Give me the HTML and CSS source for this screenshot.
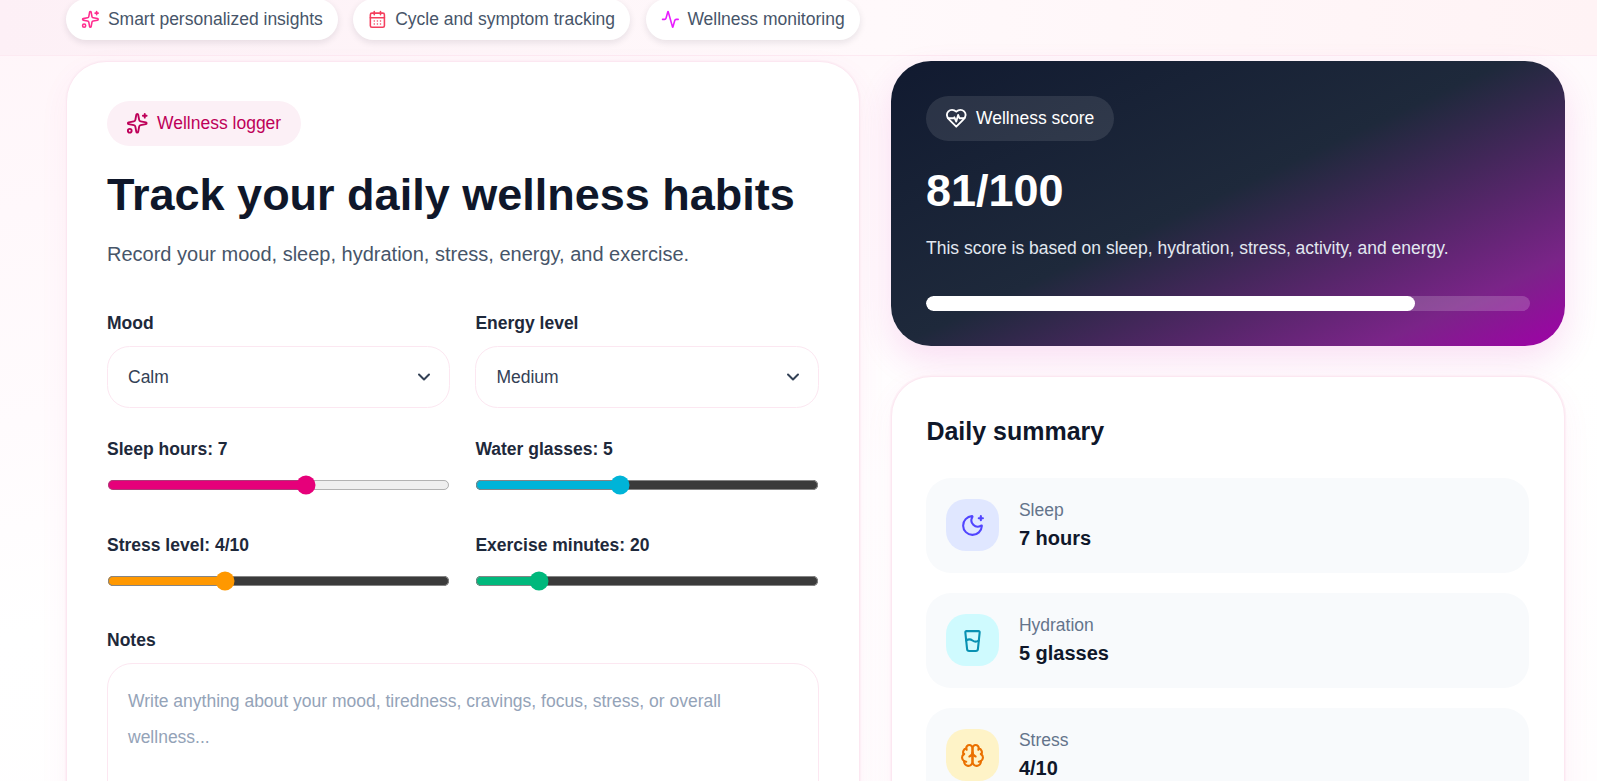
FILE: index.html
```html
<!DOCTYPE html>
<html lang="en">
<head>
<meta charset="utf-8">
<title>Wellness tracker</title>
<link rel="stylesheet" href="styles.css">
</head>
<body>
<div class="page">
  <header class="strip">
    <div class="chip"><svg class="ico c-pink" viewBox="0 0 24 24"><path d="M11.017 2.814a1 1 0 0 1 1.966 0l1.051 5.558a2 2 0 0 0 1.594 1.594l5.558 1.051a1 1 0 0 1 0 1.966l-5.558 1.051a2 2 0 0 0-1.594 1.594l-1.051 5.558a1 1 0 0 1-1.966 0l-1.051-5.558a2 2 0 0 0-1.594-1.594l-5.558-1.051a1 1 0 0 1 0-1.966l5.558-1.051a2 2 0 0 0 1.594-1.594z"/><path d="M20 2v4"/><path d="M22 4h-4"/><circle cx="4" cy="20" r="2"/></svg>Smart personalized insights</div>
    <div class="chip"><svg class="ico c-rose" viewBox="0 0 24 24"><path d="M8 2v4"/><path d="M16 2v4"/><rect x="3" y="4" width="18" height="18" rx="2"/><path d="M3 10h18"/><path d="M8 14h.01"/><path d="M12 14h.01"/><path d="M16 14h.01"/><path d="M8 18h.01"/><path d="M12 18h.01"/><path d="M16 18h.01"/></svg>Cycle and symptom tracking</div>
    <div class="chip"><svg class="ico c-fuchsia" viewBox="0 0 24 24"><path d="M22 12h-2.48a2 2 0 0 0-1.93 1.46l-2.35 8.36a.25.25 0 0 1-.48 0L9.24 2.18a.25.25 0 0 0-.48 0l-2.35 8.36A2 2 0 0 1 4.49 12H2"/></svg>Wellness monitoring</div>
  </header>
  <main class="layout">
    <section class="card logger">
      <div class="pill"><svg class="ico" viewBox="0 0 24 24"><path d="M11.017 2.814a1 1 0 0 1 1.966 0l1.051 5.558a2 2 0 0 0 1.594 1.594l5.558 1.051a1 1 0 0 1 0 1.966l-5.558 1.051a2 2 0 0 0-1.594 1.594l-1.051 5.558a1 1 0 0 1-1.966 0l-1.051-5.558a2 2 0 0 0-1.594-1.594l-5.558-1.051a1 1 0 0 1 0-1.966l5.558-1.051a2 2 0 0 0 1.594-1.594z"/><path d="M20 2v4"/><path d="M22 4h-4"/><circle cx="4" cy="20" r="2"/></svg>Wellness logger</div>
      <h1>Track your daily wellness habits</h1>
      <p class="lead">Record your mood, sleep, hydration, stress, energy, and exercise.</p>
      <div class="fields">
        <label class="field"><span class="lbl">Mood</span>
          <select class="input"><option>Calm</option></select></label>
        <label class="field"><span class="lbl">Energy level</span>
          <select class="input"><option>Medium</option></select></label>
        <label class="field"><span class="lbl">Sleep hours: 7</span>
          <input class="range r-pink" type="range" min="0" max="12" value="7"></label>
        <label class="field"><span class="lbl">Water glasses: 5</span>
          <input class="range r-cyan" type="range" min="0" max="12" value="5"></label>
        <label class="field"><span class="lbl">Stress level: 4/10</span>
          <input class="range r-orange" type="range" min="1" max="10" value="4"></label>
        <label class="field"><span class="lbl">Exercise minutes: 20</span>
          <input class="range r-green" type="range" min="0" max="120" value="20"></label>
      </div>
      <label class="field notes"><span class="lbl">Notes</span>
        <textarea class="area" rows="6" placeholder="Write anything about your mood, tiredness, cravings, focus, stress, or overall wellness..."></textarea></label>
    </section>
    <aside class="side">
      <section class="score">
        <div class="pill score-pill"><svg class="ico" viewBox="0 0 24 24"><path d="M19 14c1.49-1.46 3-3.21 3-5.5A5.5 5.5 0 0 0 16.5 3c-1.76 0-3 .5-4.5 2-1.5-1.5-2.74-2-4.5-2A5.5 5.5 0 0 0 2 8.5c0 2.3 1.5 4.05 3 5.5l7 7Z"/><path d="M3.22 12H9.5l.5-1 2 4.5 2-7 1.5 3.5h5.27"/></svg>Wellness score</div>
        <div class="score-num">81/100</div>
        <p class="score-text">This score is based on sleep, hydration, stress, activity, and energy.</p>
        <div class="bar"><div class="bar-fill" style="width:81%"></div></div>
      </section>
      <section class="card summary">
        <h2>Daily summary</h2>
        <div class="items">
          <div class="item"><div class="tile t-indigo"><svg class="ico" viewBox="0 0 24 24"><path d="M18 5h4"/><path d="M20 3v4"/><path d="M20.985 12.486a9 9 0 1 1-9.473-9.472c.405-.022.617.46.402.803a6 6 0 0 0 8.268 8.268c.344-.215.825-.004.803.401"/></svg></div><div><div class="item-k">Sleep</div><div class="item-v">7 hours</div></div></div>
          <div class="item"><div class="tile t-cyan"><svg class="ico" viewBox="0 0 24 24"><path d="M5.116 4.104A1 1 0 0 1 6.11 3h11.78a1 1 0 0 1 .994 1.105L17.19 20.21A2 2 0 0 1 15.2 22H8.8a2 2 0 0 1-2-1.79z"/><path d="M6 12a5 5 0 0 1 6 0 5 5 0 0 0 6 0"/></svg></div><div><div class="item-k">Hydration</div><div class="item-v">5 glasses</div></div></div>
          <div class="item"><div class="tile t-amber"><svg class="ico" viewBox="0 0 24 24"><path d="M12 5a3 3 0 1 0-5.997.125 4 4 0 0 0-2.526 5.77 4 4 0 0 0 .556 6.588A4 4 0 1 0 12 18Z"/><path d="M12 5a3 3 0 1 1 5.997.125 4 4 0 0 1 2.526 5.77 4 4 0 0 1-.556 6.588A4 4 0 1 1 12 18Z"/><path d="M15 13a4.5 4.5 0 0 1-3-4 4.5 4.5 0 0 1-3 4"/><path d="M17.599 6.5a3 3 0 0 0 .399-1.375"/><path d="M6.003 5.125A3 3 0 0 0 6.401 6.5"/><path d="M3.477 10.896a4 4 0 0 1 .585-.396"/><path d="M19.938 10.5a4 4 0 0 1 .585.396"/><path d="M6 18a4 4 0 0 1-1.967-.516"/><path d="M19.967 17.484A4 4 0 0 1 18 18"/></svg></div><div><div class="item-k">Stress</div><div class="item-v">4/10</div></div></div>
        </div>
      </section>
    </aside>
  </main>
</div>
</body>
</html>
```
FILE: styles.css
```css
html, body { margin: 0; height: 100%; overflow: hidden; background: #fff; }
.page {
  zoom: 1.25;
  height: 625px;
  overflow: hidden;
  font-family: "Liberation Sans", Arial, sans-serif;
  color: #0f172a;
  background: linear-gradient(170deg, #fff5f9 0%, #fffbfd 40%, #ffffff 60%, #fffdfe 100%);
}
.strip {
  height: 45px;
  box-sizing: border-box;
  padding: 0 25.6px 12px 52.8px;
  display: flex;
  align-items: flex-end;
  gap: 12.4px;
  border-bottom: 1px solid #fdeaf2;
  background: linear-gradient(90deg, #fdf0f6, #fff9fb 55%, #fff3f5);
}
.chip {
  height: 33px;
  box-sizing: border-box;
  padding: 0 12px;
  display: flex;
  align-items: center;
  gap: 6.5px;
  background: #fff;
  border-radius: 999px;
  font-size: 14px;
  color: #475569;
  box-shadow: 0 2px 6px rgba(15, 23, 42, .1);
}
.ico { width: 15px; height: 15px; fill: none; stroke: currentColor; stroke-width: 2; stroke-linecap: round; stroke-linejoin: round; flex: none; }
.c-pink { color: #ff2d8f; }
.c-rose { color: #f43f5e; }
.c-fuchsia { color: #e81cff; }
.layout {
  display: grid;
  grid-template-columns: 635px 539px;
  column-gap: 25px;
  padding: 3.8px 25.6px 0 52.8px;
  align-items: start;
}
.card {
  background: #fff;
  border: 1px solid #fce7f1;
  border-radius: 32px;
  box-shadow: 0 0 0 1px #fdf0f6, 0 8px 24px rgba(236, 72, 153, .06);
}
.logger { padding: 31px 32px 32px; }
.pill {
  display: inline-flex;
  align-items: center;
  height: 36px;
  padding: 0 16px 0 15px;
  gap: 7px;
  border-radius: 999px;
  background: #fcf0f6;
  color: #be0059;
  font-size: 14px;
}
.pill .ico { width: 18px; height: 18px; }
h1 { margin: 16.4px 0 0; font-size: 36px; line-height: 46px; font-weight: 700; color: #0f172a; }
.lead { margin: 12px 0 0; font-size: 16px; line-height: 24px; color: #475569; }
.fields { margin-top: 34.6px; display: grid; grid-template-columns: 1fr 1fr; column-gap: 20px; row-gap: 24px; }
.field { display: flex; flex-direction: column; gap: 9.5px; min-width: 0; }
.lbl { font-size: 14px; line-height: 18px; font-weight: 700; color: #1e293b; }
.input {
  appearance: none;
  height: 49.4px;
  padding: 0 36px 0 16px;
  border: 1px solid #fce7f1;
  border-radius: 18px;
  background: #fff url("data:image/svg+xml,%3Csvg xmlns='http://www.w3.org/2000/svg' viewBox='0 0 24 24' fill='none' stroke='%23334155' stroke-width='2.4' stroke-linecap='round' stroke-linejoin='round'%3E%3Cpath d='m6 9 6 6 6-6'/%3E%3C/svg%3E") no-repeat right 12px center / 16px 16px;
  font: 14px "Liberation Sans", Arial, sans-serif;
  color: #334155;
}
.range { width: 100%; margin: 2px 0 7px; box-sizing: border-box; }
.r-pink { accent-color: #e6007a; }
.r-cyan { accent-color: #00b4d8; }
.r-orange { accent-color: #ff9800; }
.r-green { accent-color: #00b87c; }
.notes { margin-top: 24px; gap: 8.8px; }
.area {
  height: 160px;
  box-sizing: border-box;
  padding: 16px 16px;
  border: 1px solid #fce7f1;
  border-radius: 20px;
  resize: none;
  outline: none;
  font: 14px/28.5px "Liberation Sans", Arial, sans-serif;
}
.area::placeholder { color: #94a3b8; }
.side { display: flex; flex-direction: column; gap: 24px; }
.score {
  height: 228px;
  box-sizing: border-box;
  padding: 28px;
  border-radius: 32px;
  color: #fff;
  background: linear-gradient(155deg, #111a30 0%, #1e293b 48%, #7a2488 85%, #a000a8 100%);
  box-shadow: 0 12px 28px rgba(219, 39, 180, .14);
}
.score-pill { background: rgba(255, 255, 255, .1); color: #fff; }
.score-num { margin-top: 17.2px; font-size: 36px; line-height: 44px; font-weight: 700; }
.score-text { margin: 15px 0 0; font-size: 14px; line-height: 20px; color: #e2e8f0; }
.bar { margin-top: 27.5px; height: 12px; border-radius: 999px; background: rgba(255, 255, 255, .18); overflow: hidden; }
.bar-fill { height: 100%; background: #fff; border-radius: 999px; }
.summary { padding: 29.6px 27.5px 28px; }
h2 { margin: 0; font-size: 20px; line-height: 28px; font-weight: 700; color: #0f172a; }
.items { margin-top: 23.4px; display: flex; flex-direction: column; gap: 16px; }
.item { display: flex; align-items: center; gap: 16px; height: 76px; box-sizing: border-box; padding: 0 16px 1px; border-radius: 20px; background: #f8fafc; }
.tile { width: 42px; height: 42px; border-radius: 16px; display: flex; align-items: center; justify-content: center; flex: none; }
.tile .ico { width: 20px; height: 20px; }
.t-indigo { background: #e0e7ff; color: #5145ff; }
.t-cyan { background: #cffafe; color: #0891b2; }
.t-amber { background: #fef3c7; color: #ea7000; }
.item-k { font-size: 14px; line-height: 20px; color: #64748b; }
.item-v { margin-top: 2px; font-size: 16px; line-height: 22px; font-weight: 700; color: #0f172a; }
```
